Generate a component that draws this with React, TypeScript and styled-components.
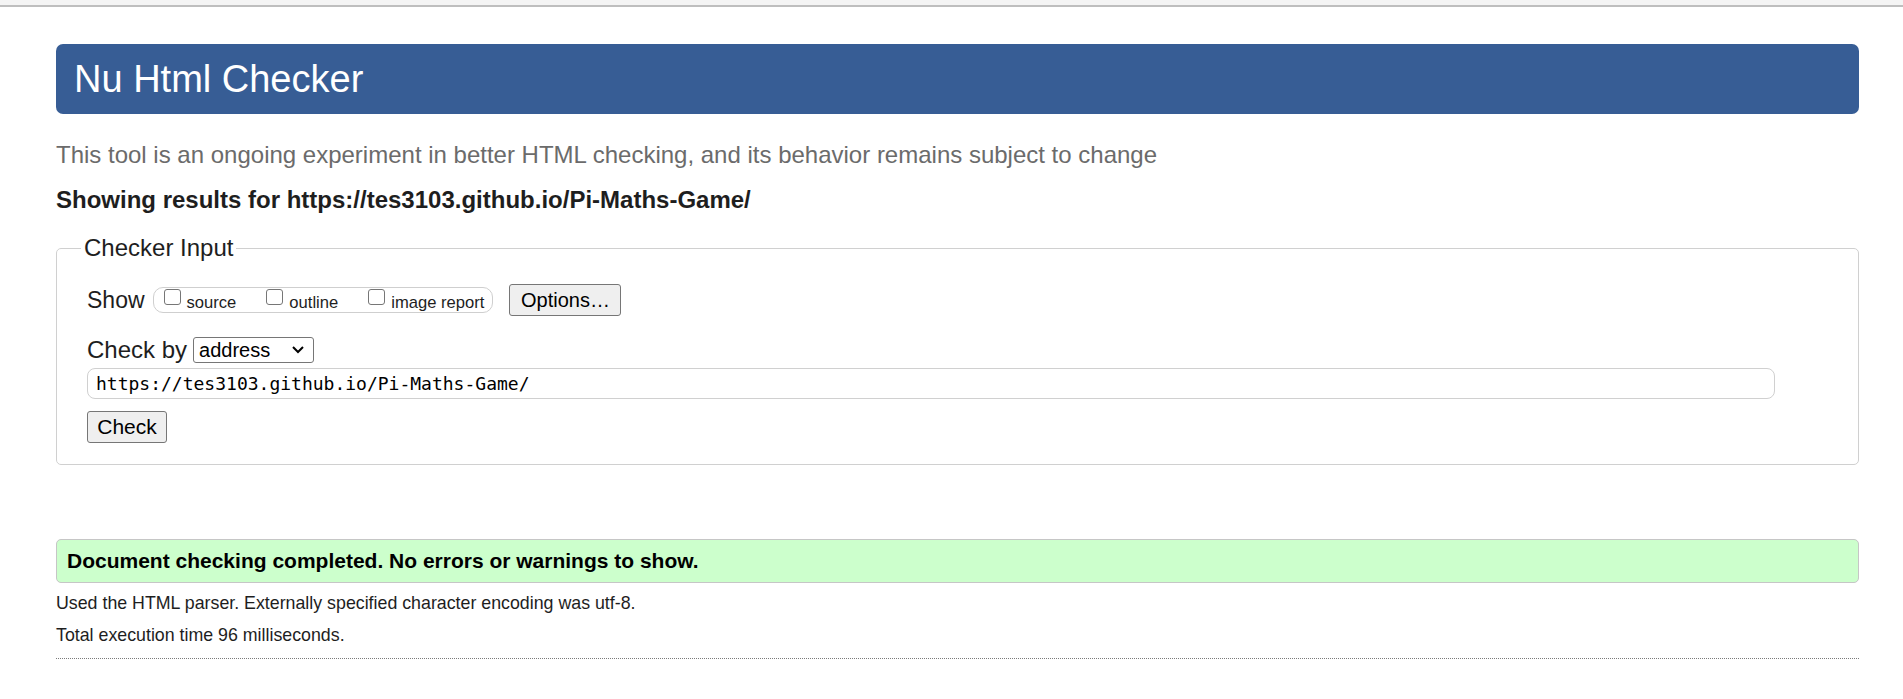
import * as React from 'react';
import styled, { createGlobalStyle } from 'styled-components';

const GlobalStyle = createGlobalStyle`
    html, body {
        margin: 0;
        padding: 0;
        background: #fff;
    }
    body {
        font-family: "Liberation Sans", Arial, sans-serif;
        color: #222;
    }
`;

const TopStrip = styled.div`
    height: 5px;
    background: #f4f4f4;
    border-bottom: 2px solid #bebebe;
`;

const Page = styled.div`
    margin: 0 44px 0 56px;
`;

const Header = styled.div`
    margin-top: 37px;
    height: 70px;
    border-radius: 7px;
    background-color: #375d95;
    display: flex;
    align-items: center;
    padding-left: 18px;

    h1{
        margin: 0;
        font-size: 38px;
        font-weight: 400;
        color: #fff;
        line-height: 1;
    }
`;

const Intro = styled.p`
    margin: 26px 0 0;
    font-size: 24px;
    line-height: 30px;
    color: #6b6b6b;
`;

const ResultsFor = styled.p`
    margin: 16px 0 0;
    font-size: 24px;
    line-height: 28px;
    font-weight: 700;
    color: #1e1e1e;
`;

const InputSet = styled.fieldset`
    margin: 20px 0 0;
    padding: 0 0 21px 30px;
    border: 1px solid #d0d0d0;
    border-radius: 5px;

    legend{
        margin-left: -6px;
        padding: 0 3px;
        font-size: 24px;
        line-height: 28px;
        color: #1e1e1e;
    }
`;

const Row = styled.div<{ top: number }>`
    display: flex;
    align-items: center;
    margin-top: ${(props) => props.top}px;
`;

const RowLabel = styled.span<{ size: number, gap: number }>`
    font-size: ${(props) => props.size}px;
    color: #1e1e1e;
    margin-right: ${(props) => props.gap}px;
`;

const OptionGroup = styled.div`
    display: flex;
    align-items: baseline;
    height: 26px;
    box-sizing: border-box;
    border: 1px solid #cfcfcf;
    border-radius: 10px;
    padding: 0 8px 0 10px;
    margin-right: 16px;
`;

const OptionLabel = styled.label<{ last?: boolean }>`
    display: flex;
    align-items: flex-start;
    font-size: 16.6px;
    color: #1e1e1e;
    margin-right: ${(props) => (props.last ? 0 : 30)}px;
    padding-top: 1px;

    span{
        margin-top: 4px;
    }
`;

const Checkbox = styled.input`
    appearance: none;
    width: 17px;
    height: 16px;
    margin: 0 6px 0 0;
    border: 1.5px solid #767676;
    border-radius: 3px;
    background: #fff;
    box-sizing: border-box;
`;

const Button = styled.button<{ w: number, size: number }>`
    width: ${(props) => props.w}px;
    height: 32px;
    box-sizing: border-box;
    padding: 0;
    border: 1px solid #767676;
    border-radius: 3px;
    background: #efefef;
    font-family: "Liberation Sans", Arial, sans-serif;
    font-size: ${(props) => props.size}px;
    color: #000;
`;

const SelectWrap = styled.div`
    position: relative;
    width: 121px;
    height: 26px;

    svg{
        position: absolute;
        right: 8px;
        top: 7px;
        pointer-events: none;
    }
`;

const Select = styled.select`
    appearance: none;
    width: 100%;
    height: 100%;
    box-sizing: border-box;
    border: 1px solid #767676;
    border-radius: 3px;
    background: #fff;
    padding: 0 0 0 5px;
    font-family: "Liberation Sans", Arial, sans-serif;
    font-size: 20px;
    color: #000;
`;

const UrlInput = styled.input`
    display: block;
    margin-top: 4px;
    width: 1688px;
    height: 31px;
    box-sizing: border-box;
    border: 1px solid #d0d0d0;
    border-radius: 8px;
    padding: 0 0 0 8px;
    font-family: "DejaVu Sans Mono", "Liberation Mono", monospace;
    font-size: 18px;
    color: #000;
    outline: none;
`;

const ButtonRow = styled.div`
    margin-top: 12px;
`;

const Success = styled.div`
    margin-top: 74px;
    height: 44px;
    box-sizing: border-box;
    display: flex;
    align-items: center;
    padding-left: 10px;
    background: #ccffcc;
    border: 1.5px solid #c6c6c6;
    border-radius: 5px;
    font-size: 21px;
    font-weight: 700;
    color: #000;
`;

const Detail = styled.p<{ top: number }>`
    margin: ${(props) => props.top}px 0 0;
    font-size: 17.8px;
    line-height: 24px;
    color: #1e1e1e;
`;

const Divider = styled.hr`
    margin: 11px 0 0;
    border: 0;
    border-top: 1px dotted #7a7a7a;
`;

export default function App() {
    return (
        <>
            <GlobalStyle />
            <TopStrip />
            <Page>
                <Header>
                    <h1>Nu Html Checker</h1>
                </Header>
                <Intro>This tool is an ongoing experiment in better HTML checking, and its behavior remains subject to change</Intro>
                <ResultsFor>Showing results for https://tes3103.github.io/Pi-Maths-Game/</ResultsFor>

                <InputSet>
                    <legend>Checker Input</legend>
                    <Row top={22}>
                        <RowLabel size={23} gap={8}>Show</RowLabel>
                        <OptionGroup>
                            <OptionLabel><Checkbox type="checkbox" /><span>source</span></OptionLabel>
                            <OptionLabel><Checkbox type="checkbox" /><span>outline</span></OptionLabel>
                            <OptionLabel last><Checkbox type="checkbox" /><span>image report</span></OptionLabel>
                        </OptionGroup>
                        <Button w={112} size={20}>Options…</Button>
                    </Row>
                    <Row top={20}>
                        <RowLabel size={24} gap={6}>Check by</RowLabel>
                        <SelectWrap>
                            <Select defaultValue="address">
                                <option value="address">address</option>
                                <option value="upload">file upload</option>
                                <option value="text">text input</option>
                            </Select>
                            <svg width="16" height="12" viewBox="0 0 16 12">
                                <path d="M3 3l5 5 5-5" fill="none" stroke="#000" strokeWidth="2" />
                            </svg>
                        </SelectWrap>
                    </Row>
                    <UrlInput defaultValue="https://tes3103.github.io/Pi-Maths-Game/" />
                    <ButtonRow>
                        <Button w={80} size={21}>Check</Button>
                    </ButtonRow>
                </InputSet>

                <Success>Document checking completed. No errors or warnings to show.</Success>
                <Detail top={8}>Used the HTML parser. Externally specified character encoding was utf-8.</Detail>
                <Detail top={8}>Total execution time 96 milliseconds.</Detail>
                <Divider />
            </Page>
        </>
    );
}
